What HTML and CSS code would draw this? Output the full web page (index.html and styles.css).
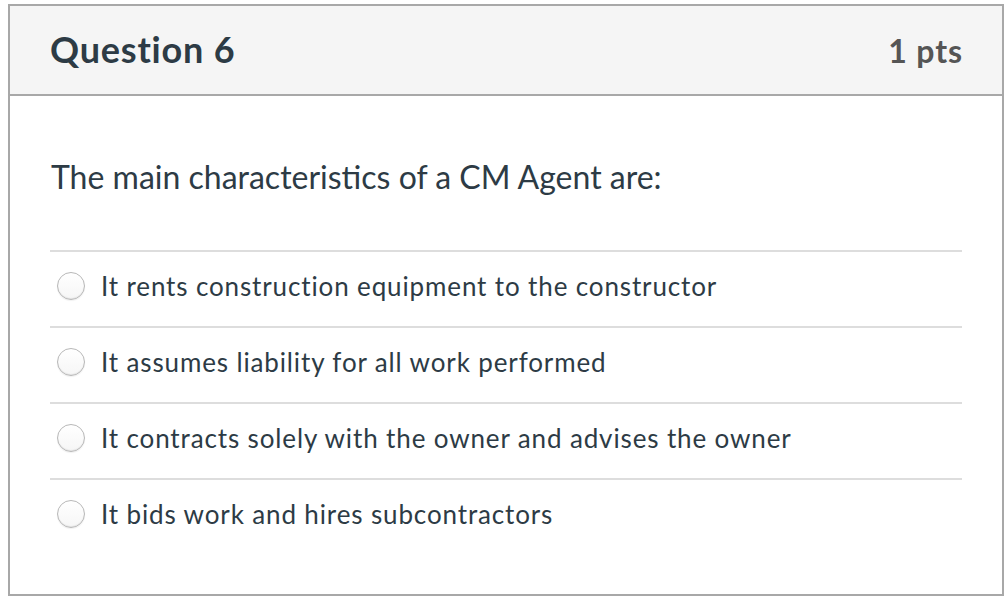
FILE: index.html
```html
<!DOCTYPE html>
<html lang="en">
<head>
<meta charset="utf-8">
<title>Question 6</title>
<link rel="stylesheet" href="styles.css">
</head>
<body>
<div class="question">
  <div class="header">
    <h2 class="title">Question 6</h2>
    <span class="points">1 pts</span>
  </div>
  <div class="content">
    <p class="prompt">The main characteristics of a CM Agent are:</p>
    <div class="answers">
      <label class="answer"><span class="radio"></span><span class="label">It rents construction equipment to the constructor</span></label>
      <label class="answer"><span class="radio"></span><span class="label">It assumes liability for all work performed</span></label>
      <label class="answer"><span class="radio"></span><span class="label">It contracts solely with the owner and advises the owner</span></label>
      <label class="answer"><span class="radio"></span><span class="label">It bids work and hires subcontractors</span></label>
    </div>
  </div>
</div>
</body>
</html>
```
FILE: styles.css
```css
html, body {
  margin: 0;
  padding: 0;
  background: #ffffff;
}
body {
  padding: 4px 2px 0 8px;
  font-family: Lato, "Noto Sans", sans-serif;
  color: #2d3b45;
}
.question {
  width: 996px;
  height: 592px;
  box-sizing: border-box;
  border: 2px solid #a8a8a8;
  background: #ffffff;
  display: flex;
  flex-direction: column;
}
.header {
  height: 90px;
  box-sizing: border-box;
  background: #f5f5f5;
  border-bottom: 2px solid #a8a8a8;
  padding: 22px 40px 0 40px;
  display: flex;
  justify-content: space-between;
  align-items: baseline;
}
.title {
  margin: 0;
  font-size: 36px;
  font-weight: 700;
  line-height: 1.2;
  letter-spacing: 0.8px;
  color: #2d3b45;
}
.points {
  font-size: 32px;
  font-weight: 700;
  line-height: 1.2;
  letter-spacing: 0.9px;
  margin-right: -1px;
  color: #555555;
}
.content {
  padding: 62px 40px 0 40px;
}
.prompt {
  margin: 0 0 54px 0;
  font-size: 32px;
  line-height: 1.2;
  padding-left: 1px;
}
.answers {
  display: flex;
  flex-direction: column;
}
.answer {
  display: flex;
  align-items: center;
  gap: 16px;
  border-top: 2px solid #dddddd;
  height: 76px;
  box-sizing: border-box;
  padding: 0 0 6px 7px;
  font-size: 26px;
  line-height: 30px;
  letter-spacing: 0.87px;
}
.radio {
  width: 28px;
  height: 28px;
  box-sizing: border-box;
  border-radius: 50%;
  border: 1px solid #b8b8b8;
  background: linear-gradient(#ffffff, #f6f6f6);
  box-shadow: inset 0 -1px 1px rgba(0, 0, 0, 0.08), 0 1px 1px rgba(0, 0, 0, 0.06);
  flex: none;
}
.label {
  color: #2d3b45;
}
```
